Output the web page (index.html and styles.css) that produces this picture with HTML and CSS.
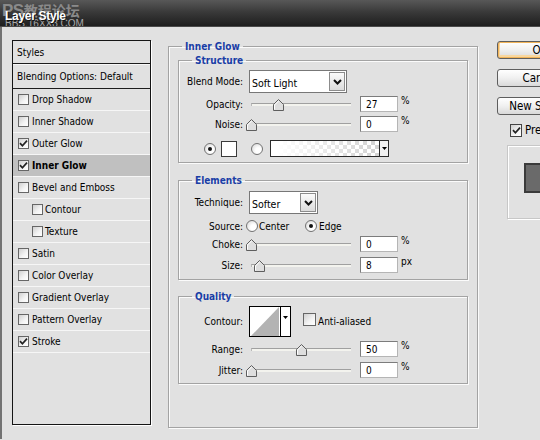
FILE: index.html
```html
<!DOCTYPE html>
<html>
<head>
<meta charset="utf-8">
<title>Layer Style</title>
<link rel="stylesheet" href="styles.css">
</head>
<body>
<div class="titlebar">
  <span class="wm-cn"><span class="wm-ps">PS</span>教程论坛</span>
  <span class="wm-url">BBS.16XX8.COM</span>
  <span class="title">Layer Style</span>
</div>
<div class="main">
  <div class="styles-panel">
    <div class="sp-head">Styles</div>
    <div class="sp-blend">Blending Options: Default</div>
    <div class="sp-row"><span class="cb"></span>Drop Shadow</div>
    <div class="sp-row"><span class="cb"></span>Inner Shadow</div>
    <div class="sp-row"><span class="cb"><svg width="9" height="9" viewBox="0 0 9 9"><path d="M1 4.2L3.4 6.8L8 1.6" fill="none" stroke="#222" stroke-width="1.7"/></svg></span>Outer Glow</div>
    <div class="sp-row active"><span class="cb"><svg width="9" height="9" viewBox="0 0 9 9"><path d="M1 4.2L3.4 6.8L8 1.6" fill="none" stroke="#222" stroke-width="1.7"/></svg></span><b>Inner Glow</b></div>
    <div class="sp-row"><span class="cb"></span>Bevel and Emboss</div>
    <div class="sp-row sub"><span class="cb"></span>Contour</div>
    <div class="sp-row sub"><span class="cb"></span>Texture</div>
    <div class="sp-row"><span class="cb"></span>Satin</div>
    <div class="sp-row"><span class="cb"></span>Color Overlay</div>
    <div class="sp-row"><span class="cb"></span>Gradient Overlay</div>
    <div class="sp-row"><span class="cb"></span>Pattern Overlay</div>
    <div class="sp-row"><span class="cb"><svg width="9" height="9" viewBox="0 0 9 9"><path d="M1 4.2L3.4 6.8L8 1.6" fill="none" stroke="#222" stroke-width="1.7"/></svg></span>Stroke</div>
  </div>

  <fieldset class="group outer">
    <legend>Inner Glow</legend>

    <fieldset class="group structure">
      <legend>Structure</legend>
      <div class="row r-select">
        <span class="lbl">Blend Mode:</span>
        <div class="select w-blend"><span class="sel-text">Soft Light</span><span class="sel-btn"><svg width="9" height="6" viewBox="0 0 9 6"><path d="M1 1L4.5 4.5L8 1" fill="none" stroke="#111" stroke-width="2"/></svg></span></div>
      </div>
      <div class="row r-num m3">
        <span class="lbl">Opacity:</span>
        <div class="slider"><div class="track"></div><svg class="thumb" style="--v:27" width="11" height="12" viewBox="0 0 11 12"><path d="M0.5 11.5V5.5L5.5 0.5L10.5 5.5V11.5Z" fill="#dedede" stroke="#5e5e5e"/><path d="M1.5 10.5V6L5.5 2" fill="none" stroke="#fff"/></svg></div>
        <div class="num">27</div><span class="unit">%</span>
      </div>
      <div class="row r-num m4">
        <span class="lbl">Noise:</span>
        <div class="slider"><div class="track"></div><svg class="thumb" style="--v:0" width="11" height="12" viewBox="0 0 11 12"><path d="M0.5 11.5V5.5L5.5 0.5L10.5 5.5V11.5Z" fill="#dedede" stroke="#5e5e5e"/><path d="M1.5 10.5V6L5.5 2" fill="none" stroke="#fff"/></svg></div>
        <div class="num">0</div><span class="unit">%</span>
      </div>
      <div class="row r-color">
        <span class="radio on"></span>
        <span class="swatch"></span>
        <span class="radio r2"></span>
        <div class="grad"><span class="grad-fill"></span><span class="grad-btn"><svg width="5" height="3" viewBox="0 0 5 3"><path d="M0 0H5L2.5 3Z" fill="#000"/></svg></span></div>
      </div>
    </fieldset>

    <fieldset class="group elements">
      <legend>Elements</legend>
      <div class="row r-select">
        <span class="lbl">Technique:</span>
        <div class="select w-tech"><span class="sel-text">Softer</span><span class="sel-btn"><svg width="9" height="6" viewBox="0 0 9 6"><path d="M1 1L4.5 4.5L8 1" fill="none" stroke="#111" stroke-width="2"/></svg></span></div>
      </div>
      <div class="row r-source">
        <span class="lbl">Source:</span>
        <span class="radio src1"></span><span class="opt opt-center">Center</span>
        <span class="radio on"></span><span class="opt">Edge</span>
      </div>
      <div class="row r-num m4">
        <span class="lbl">Choke:</span>
        <div class="slider"><div class="track"></div><svg class="thumb" style="--v:0" width="11" height="12" viewBox="0 0 11 12"><path d="M0.5 11.5V5.5L5.5 0.5L10.5 5.5V11.5Z" fill="#dedede" stroke="#5e5e5e"/><path d="M1.5 10.5V6L5.5 2" fill="none" stroke="#fff"/></svg></div>
        <div class="num">0</div><span class="unit">%</span>
      </div>
      <div class="row r-num m5">
        <span class="lbl">Size:</span>
        <div class="slider"><div class="track"></div><svg class="thumb" style="--v:8" width="11" height="12" viewBox="0 0 11 12"><path d="M0.5 11.5V5.5L5.5 0.5L10.5 5.5V11.5Z" fill="#dedede" stroke="#5e5e5e"/><path d="M1.5 10.5V6L5.5 2" fill="none" stroke="#fff"/></svg></div>
        <div class="num">8</div><span class="unit">px</span>
      </div>
    </fieldset>

    <fieldset class="group quality">
      <legend>Quality</legend>
      <div class="row r-contour">
        <span class="lbl">Contour:</span>
        <div class="contour">
          <span class="c-graph"><svg width="30" height="29" viewBox="0 0 30 29"><path d="M1 29L29 0V29Z" fill="#b3b3b3"/></svg></span>
          <span class="c-btn"><svg width="5" height="3" viewBox="0 0 5 3"><path d="M0 0H5L2.5 3Z" fill="#000"/></svg></span>
        </div>
        <span class="cb big"></span><span class="opt">Anti-aliased</span>
      </div>
      <div class="row r-num m4">
        <span class="lbl">Range:</span>
        <div class="slider"><div class="track"></div><svg class="thumb" style="--v:50" width="11" height="12" viewBox="0 0 11 12"><path d="M0.5 11.5V5.5L5.5 0.5L10.5 5.5V11.5Z" fill="#dedede" stroke="#5e5e5e"/><path d="M1.5 10.5V6L5.5 2" fill="none" stroke="#fff"/></svg></div>
        <div class="num">50</div><span class="unit">%</span>
      </div>
      <div class="row r-num m5">
        <span class="lbl">Jitter:</span>
        <div class="slider"><div class="track"></div><svg class="thumb" style="--v:0" width="11" height="12" viewBox="0 0 11 12"><path d="M0.5 11.5V5.5L5.5 0.5L10.5 5.5V11.5Z" fill="#dedede" stroke="#5e5e5e"/><path d="M1.5 10.5V6L5.5 2" fill="none" stroke="#fff"/></svg></div>
        <div class="num">0</div><span class="unit">%</span>
      </div>
    </fieldset>
  </fieldset>

  <div class="side">
    <div class="btn default">OK</div>
    <div class="btn">Cancel</div>
    <div class="btn">New Style...</div>
    <div class="preview-row"><span class="cb pv"><svg width="9" height="9" viewBox="0 0 9 9"><path d="M1 4.2L3.4 6.8L8 1.6" fill="none" stroke="#222" stroke-width="1.7"/></svg></span><span>Preview</span></div>
    <div class="preview-box"><div class="preview-swatch"></div></div>
  </div>
</div>
</body>
</html>
```

FILE: styles.css
```css
* { box-sizing: border-box; }

html, body {
  margin: 0;
  padding: 0;
}

body {
  width: 540px;
  height: 440px;
  overflow: hidden;
  background: #e1e1e1;
  font-family: "DejaVu Sans Condensed", "Liberation Sans", sans-serif;
  font-size: 10px;
  color: #000;
}

/* ---------- title bar ---------- */
.titlebar {
  position: relative;
  height: 27px;
  background: linear-gradient(#585858, #3a3a3a 45%, #1e1e1e);
  border-bottom: 1px solid #4a4a4a;
  overflow: hidden;
}

.wm-cn {
  position: absolute;
  left: 2px;
  top: 1px;
  font-family: "Noto Sans CJK SC", sans-serif;
  font-weight: bold;
  font-size: 14px;
  line-height: 18px;
  color: #8a8a8a;
}

.wm-ps {
  font-family: "Liberation Sans", sans-serif;
  font-size: 17px;
  letter-spacing: -0.5px;
}

.wm-url {
  position: absolute;
  left: 5px;
  top: 19px;
  font-family: "Liberation Sans", sans-serif;
  font-size: 10px;
  line-height: 10px;
  color: #a8a8a8;
}

.title {
  position: absolute;
  left: 5px;
  top: 9px;
  font-family: "Liberation Sans", sans-serif;
  font-weight: bold;
  font-size: 12px;
  line-height: 14px;
  letter-spacing: -0.3px;
  color: #fff;
  text-shadow: 1px 1px 0 #111;
}

/* ---------- main area ---------- */
.main {
  display: flex;
  align-items: flex-start;
  height: 412px;
  padding: 13px 0 0 10px;
  border-left: 2px solid #727272;
}

/* ---------- styles list ---------- */
.styles-panel {
  flex-shrink: 0;
  width: 139px;
  height: 385px;
  border: 1px solid #151515;
  box-shadow: 1px 1px 0 #fff;
  background: #e1e1e1;
}

.sp-head {
  height: 23px;
  padding-left: 4px;
  line-height: 23px;
  border-bottom: 1px solid #1c1c1c;
}

.sp-blend {
  height: 25px;
  padding-left: 4px;
  line-height: 23px;
  border-top: 1px solid #f7f7f7;
  border-bottom: 1px solid #1c1c1c;
}

.sp-row {
  display: flex;
  align-items: center;
  height: 22px;
  border-bottom: 1px solid #f6f6f6;
}

.sp-row.active {
  background: #c0c0c0;
}

.cb {
  flex-shrink: 0;
  display: flex;
  align-items: center;
  justify-content: center;
  width: 11px;
  height: 11px;
  margin: 0 3px 0 5px;
  border: 1px solid #666;
  background: linear-gradient(135deg, #d0d0d0, #f4f4f4 60%, #fff);
}

.sp-row.sub .cb {
  margin-left: 19px;
  margin-right: 2px;
}

/* ---------- group boxes ---------- */
.group {
  margin: 0;
  padding: 0;
  min-width: 0;
  border: 1px solid #a3a3a3;
  box-shadow: inset 1px 1px 0 #fbfbfb, 1px 1px 0 #fbfbfb;
}

.group legend {
  padding: 0 3px;
  margin-left: 13px;
  font-weight: bold;
  line-height: 13px;
  color: #1a3ea6;
}

.outer {
  flex-shrink: 0;
  width: 310px;
  height: 388px;
  margin-left: 17px;
  padding: 0 9px;
}

.outer > legend {
  margin-left: 4px;
}

.structure {
  margin-top: 1px;
  padding-bottom: 5px;
}

.elements {
  margin-top: 11px;
  padding-bottom: 6px;
}

.quality {
  margin-top: 10px;
  padding-bottom: 5px;
}

/* ---------- rows ---------- */
.row {
  display: flex;
  align-items: center;
}

.lbl {
  flex-shrink: 0;
  width: 64px;
  text-align: right;
}

.m3 { margin-top: 3px; }
.m4 { margin-top: 4px; }
.m5 { margin-top: 5px; }

.r-select {
  height: 23px;
  margin-top: 4px;
}

.structure .r-select {
  margin-top: 3px;
}

.r-num {
  height: 16px;
}

.r-color {
  height: 17px;
  margin-top: 8px;
}

.r-source {
  height: 12px;
  margin-top: 6px;
}

.r-contour {
  height: 31px;
  margin-top: 3px;
}

/* select */
.select {
  display: flex;
  align-items: center;
  height: 23px;
  margin-left: 6px;
  padding-left: 2px;
  border: 1px solid #777;
  background: #fff;
}

.w-blend { width: 98px; }
.w-tech { width: 69px; }

.sel-text {
  padding-top: 2px;
  font-size: 10.5px;
}

.sel-btn {
  display: flex;
  align-items: center;
  justify-content: center;
  width: 16px;
  height: 19px;
  margin-left: auto;
  margin-right: 1px;
  border: 1px solid #8c8c8c;
  background: linear-gradient(#fbfbfb, #dcdcdc);
}

/* slider */
.slider {
  position: relative;
  flex-shrink: 0;
  width: 111px;
  height: 16px;
  margin-left: 6px;
}

.track {
  position: absolute;
  left: 2px;
  top: 7px;
  width: 100px;
  height: 3px;
  border-top: 1px solid #a0a0a0;
  border-left: 1px solid #b8b8b8;
  background: #f3f3ee;
}

.thumb {
  position: absolute;
  top: 3px;
  left: calc(2px + var(--v) * 1px - 5px);
}

.num {
  flex-shrink: 0;
  width: 38px;
  height: 16px;
  padding: 1px 0 0 5px;
  line-height: 14px;
  border: 1px solid #7c7c7c;
  border-right-color: #b5b5b5;
  border-bottom-color: #b5b5b5;
  background: #fff;
}

.unit {
  align-self: flex-start;
  margin: -1px 0 0 3px;
  line-height: 11px;
}

/* radio */
.radio {
  position: relative;
  flex-shrink: 0;
  width: 12px;
  height: 12px;
  border-radius: 50%;
  border: 1px solid #727272;
  background: radial-gradient(circle at 65% 65%, #fff 30%, #d2d2d2);
}

.radio.on::after {
  content: "";
  position: absolute;
  left: 3px;
  top: 3px;
  width: 4px;
  height: 4px;
  border-radius: 50%;
  background: #111;
}

.r-color .radio { margin-left: 25px; }
.r-color .radio.r2 { margin-left: 14px; }

.swatch {
  flex-shrink: 0;
  width: 16px;
  height: 16px;
  margin-left: 5px;
  border: 1px solid #3a3a3a;
  background: #fff;
}

.grad {
  display: flex;
  width: 119px;
  height: 17px;
  margin-left: 7px;
  border: 1px solid #2a2a2a;
}

.grad-fill {
  flex: 1;
  background:
    linear-gradient(to right, #fff 5%, rgba(255,255,255,0) 95%),
    repeating-conic-gradient(#d4d4d4 0 25%, #fff 0 50%) 0 0 / 8px 8px;
}

.grad-btn {
  display: flex;
  align-items: center;
  justify-content: center;
  width: 9px;
  border-left: 1px solid #2a2a2a;
  background: #f0f0f0;
}

/* source */
.src1 { margin-left: 3px; }

.opt {
  margin-left: 2px;
}

.opt-center {
  width: 46px;
  margin-left: 1px;
}

/* contour */
.contour {
  display: flex;
  width: 42px;
  height: 31px;
  margin-left: 6px;
  border: 1px solid #000;
  background: #fff;
}

.c-graph {
  display: flex;
  align-items: flex-end;
  width: 30px;
}

.c-btn {
  display: flex;
  justify-content: center;
  width: 10px;
  padding-top: 9px;
  border-left: 1px solid #000;
  background: #fff;
}

.cb.big {
  width: 13px;
  height: 13px;
  margin: 0 0 0 12px;
  align-self: flex-start;
  margin-top: 7px;
}

/* ---------- side column ---------- */
.side {
  flex-shrink: 0;
  display: flex;
  flex-direction: column;
  margin: 1px 0 0 19px;
}

.btn {
  width: 86px;
  height: 18px;
  margin-bottom: 10px;
  border: 1px solid #5e5e5e;
  border-radius: 3px;
  background: linear-gradient(#ffffff, #f0f0f0 50%, #d9d9d9);
  font-family: "DejaVu Sans Condensed", "Liberation Sans", sans-serif;
  font-size: 11.5px;
  line-height: 16px;
  text-align: center;
}

.btn.default {
  box-shadow: inset 0 0 0 1px #f1b45a, inset 0 -1px 0 2px #f8d7a0;
}

.preview-row {
  display: flex;
  align-items: center;
  margin: -2px 0 0 13px;
  font-size: 11.5px;
}

.cb.pv {
  width: 12px;
  height: 13px;
  margin: 0 3px 0 0;
  border-color: #444;
}

.preview-box {
  width: 60px;
  height: 74px;
  margin: 8px 0 0 10px;
  padding: 17px 0 0 16px;
  border: 1px solid #c7c7c7;
  box-shadow: inset 1px 1px 0 #fff, 1px 1px 0 #fff;
}

.preview-swatch {
  width: 34px;
  height: 30px;
  border: 2px solid #3a3a3a;
  background: #6a6a6a;
}
```
